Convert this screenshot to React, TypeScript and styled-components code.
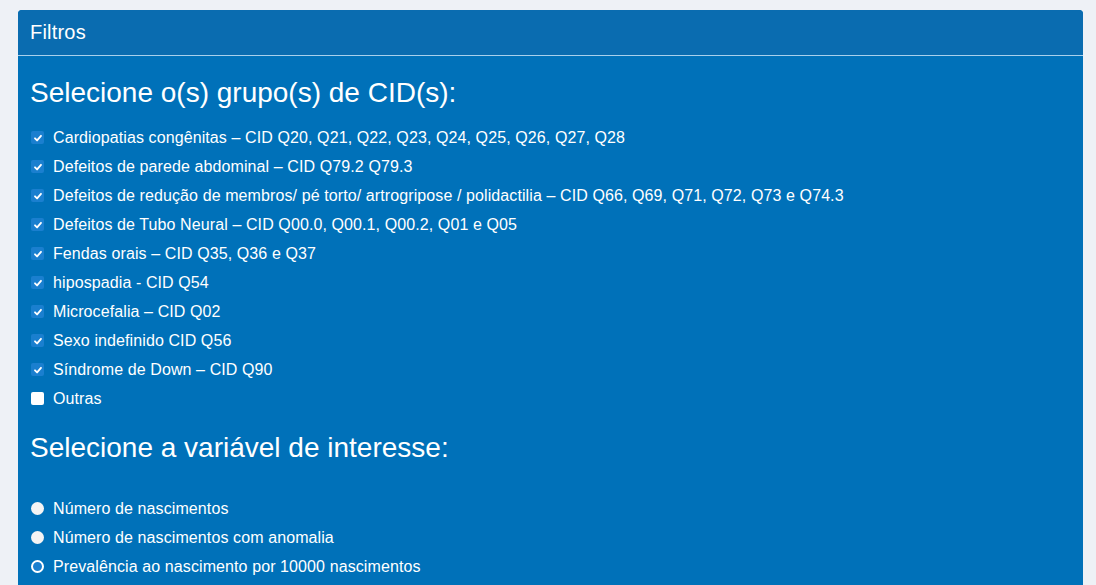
import React from 'react'
import styled, { createGlobalStyle } from 'styled-components'

const PANEL_BLUE = '#0071b9'
const HEADER_BLUE = '#0a6cb0'
const CONTROL_BLUE = '#1a7fcf'

const GlobalStyle = createGlobalStyle`
  html, body {
    margin: 0;
    padding: 0;
    background: #eef1f6;
    font-family: "Liberation Sans", Arial, sans-serif;
  }
`

const Page = styled.div`
  padding: 10px 13px 0 18px;
`

const Panel = styled.section`
  background: ${PANEL_BLUE};
  border-radius: 4px 4px 0 0;
  color: #fff;
  min-height: 575px;
`

const PanelHeader = styled.header`
  background: ${HEADER_BLUE};
  border-radius: 4px 4px 0 0;
  border-bottom: 1px solid #a9d0ec;
  height: 45px;
  display: flex;
  align-items: center;
  padding: 0 12px;
  font-size: 20px;
  letter-spacing: 0.2px;
`

const PanelBody = styled.div`
  padding: 20px 12px 0 12px;
`

const Heading = styled.h3<{ $gap: number }>`
  margin: 0 0 ${p => p.$gap}px 0;
  font-size: 28px;
  font-weight: 400;
  line-height: 34px;
`

const OptionList = styled.ul`
  list-style: none;
  margin: 0 0 18px 0;
  padding: 0;
`

const Option = styled.li`
  display: flex;
  align-items: center;
  gap: 9px;
  height: 29px;
  font-size: 16px;
  letter-spacing: 0.1px;
  padding-left: 1px;
`

const Box = styled.span<{ $checked: boolean }>`
  width: 13px;
  height: 13px;
  border-radius: 2px;
  display: inline-flex;
  align-items: center;
  justify-content: center;
  background: ${p => (p.$checked ? CONTROL_BLUE : '#fff')};
`

const Radio = styled.span<{ $checked: boolean }>`
  width: 13px;
  height: 13px;
  border-radius: 50%;
  box-sizing: border-box;
  background: ${p => (p.$checked ? CONTROL_BLUE : '#f4f4f4')};
  border: ${p => (p.$checked ? '2px solid #fff' : 'none')};
`

const cids = [
  { label: 'Cardiopatias congênitas – CID Q20, Q21, Q22, Q23, Q24, Q25, Q26, Q27, Q28', checked: true },
  { label: 'Defeitos de parede abdominal – CID Q79.2 Q79.3', checked: true },
  { label: 'Defeitos de redução de membros/ pé torto/ artrogripose / polidactilia – CID Q66, Q69, Q71, Q72, Q73 e Q74.3', checked: true },
  { label: 'Defeitos de Tubo Neural – CID Q00.0, Q00.1, Q00.2, Q01 e Q05', checked: true },
  { label: 'Fendas orais – CID Q35, Q36 e Q37', checked: true },
  { label: 'hipospadia - CID Q54', checked: true },
  { label: 'Microcefalia – CID Q02', checked: true },
  { label: 'Sexo indefinido CID Q56', checked: true },
  { label: 'Síndrome de Down – CID Q90', checked: true },
  { label: 'Outras', checked: false },
]

const variables = [
  { label: 'Número de nascimentos', checked: false },
  { label: 'Número de nascimentos com anomalia', checked: false },
  { label: 'Prevalência ao nascimento por 10000 nascimentos', checked: true },
]

const Check = () => (
  <svg width="10" height="10" viewBox="0 0 12 12">
    <path d="M2.4 6.4 L4.9 8.9 L9.6 3.4" fill="none" stroke="#fff" strokeWidth="2.2" strokeLinecap="round" strokeLinejoin="round" />
  </svg>
)

export default function App() {
  return (
    <>
      <GlobalStyle />
      <Page>
        <Panel>
          <PanelHeader>Filtros</PanelHeader>
          <PanelBody>
            <Heading $gap={13}>Selecione o(s) grupo(s) de CID(s):</Heading>
            <OptionList>
              {cids.map(c => (
                <Option key={c.label}>
                  <Box $checked={c.checked}>{c.checked && <Check />}</Box>
                  {c.label}
                </Option>
              ))}
            </OptionList>
            <Heading $gap={29}>Selecione a variável de interesse:</Heading>
            <OptionList>
              {variables.map(v => (
                <Option key={v.label}>
                  <Radio $checked={v.checked} />
                  {v.label}
                </Option>
              ))}
            </OptionList>
          </PanelBody>
        </Panel>
      </Page>
    </>
  )
}
